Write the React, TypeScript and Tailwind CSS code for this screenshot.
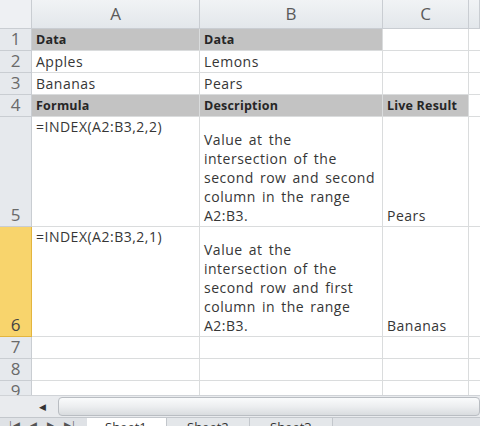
const font = "font-['Open_Sans','Liberation_Sans',sans-serif]";

type Cell = { lines?: string[]; bold?: boolean; fill?: boolean; valign?: "top" | "bottom" };

const rows: { label: string; h: string; selected?: boolean; cells: Cell[] }[] = [
  { label: "1", h: "h-[22px]", cells: [{ lines: ["Data"], bold: true, fill: true }, { lines: ["Data"], bold: true, fill: true }, {}] },
  { label: "2", h: "h-[22px]", cells: [{ lines: ["Apples"] }, { lines: ["Lemons"] }, {}] },
  { label: "3", h: "h-[22px]", cells: [{ lines: ["Bananas"] }, { lines: ["Pears"] }, {}] },
  {
    label: "4",
    h: "h-[22px]",
    cells: [
      { lines: ["Formula"], bold: true, fill: true },
      { lines: ["Description"], bold: true, fill: true },
      { lines: ["Live Result"], bold: true, fill: true },
    ],
  },
  {
    label: "5",
    h: "h-[110px]",
    cells: [
      { lines: ["=INDEX(A2:B3,2,2)"], valign: "top" },
      { lines: ["Value at the", "intersection of the", "second row and second", "column in the range", "A2:B3."] },
      { lines: ["Pears"] },
    ],
  },
  {
    label: "6",
    h: "h-[110px]",
    selected: true,
    cells: [
      { lines: ["=INDEX(A2:B3,2,1)"], valign: "top" },
      { lines: ["Value at the", "intersection of the", "second row and first", "column in the range", "A2:B3."] },
      { lines: ["Bananas"] },
    ],
  },
  { label: "7", h: "h-[22px]", cells: [{}, {}, {}] },
  { label: "8", h: "h-[22px]", cells: [{}, {}, {}] },
  { label: "9", h: "h-[22px]", cells: [{}, {}, {}] },
];

function DataCell({ cell }: { cell: Cell }) {
  return (
    <div
      className={`flex px-1 pb-[1px] border-r border-b border-[#dadcdd] overflow-hidden ${
        cell.valign === "top" ? "items-start" : "items-end"
      } ${cell.fill ? "bg-[#c3c3c3]" : "bg-white"}`}
    >
      <div
        className={`flex flex-col whitespace-nowrap ${
          cell.bold
            ? "text-[12.5px] font-bold tracking-[0.2px] text-[#262626] leading-[19px]"
            : "text-[14px] tracking-[0.5px] [word-spacing:2px] text-[#363636] leading-[19px]"
        }`}
      >
        {cell.lines?.map((l, i) => (
          <span key={i}>{l}</span>
        ))}
      </div>
    </div>
  );
}

export default function App() {
  return (
    <div className={`w-[480px] h-[426px] overflow-hidden bg-white flex flex-col ${font}`}>
      {/* Grid */}
      <div className="h-[395px] overflow-hidden shrink-0">
        <div className="grid grid-cols-[32px_168px_183px_86px_11px]">
          {/* Column headers */}
          <div className="h-[29px] bg-[#eef0f3] border-r border-b border-[#c9cdd2]" />
          {["A", "B", "C", ""].map((l, i) => (
            <div
              key={i}
              className="h-[29px] bg-gradient-to-b from-[#f1f3f5] to-[#e3e7eb] border-r border-b border-[#c9cdd2] flex items-center justify-center text-[17px] text-[#5a5a5a]"
            >
              {l}
            </div>
          ))}

          {rows.map((r) => (
            <div key={r.label} className="contents">
              <div
                className={`${r.h} flex items-end justify-center border-r border-b text-[17px] leading-[22px] ${
                  r.selected
                    ? "bg-[#f8d46c] border-[#e3b53e] text-[#444]"
                    : "bg-[#e6e9ed] border-[#c9cdd2] text-[#6a6a6a]"
                }`}
              >
                {r.label}
              </div>
              {r.cells.map((c, i) => (
                <DataCell key={i} cell={c} />
              ))}
              <div className="border-b border-[#dadcdd] bg-white" />
            </div>
          ))}
        </div>
      </div>

      {/* Horizontal scroll bar */}
      <div className="h-[22px] shrink-0 flex bg-[#e9ebee] border-t border-[#d0d3d7]">
        <div className="w-[58px] flex items-center justify-end pr-3 text-[9px] text-[#333]">◀</div>
        <div className="flex-1 my-[1px] rounded-sm border border-[#b9bdc2] bg-gradient-to-b from-[#fafbfc] via-[#eceef0] to-[#d9dcdf]" />
      </div>

      {/* Sheet tabs */}
      <div className="flex h-[22px] shrink-0 bg-[#dfe2e6] border-t border-[#c3c7cc] text-[13px] text-[#333]">
        <div className="w-[87px] flex items-start gap-[10px] pl-2 text-[9px] text-[#555]">
          <span>|◀</span>
          <span>◀</span>
          <span>▶</span>
          <span>▶|</span>
        </div>
        <div className="w-[80px] bg-white pl-[18px] border-r border-[#c3c7cc]">Sheet1</div>
        <div className="w-[83px] pl-[20px] border-r border-[#c3c7cc] bg-[#e4e7ea]">Sheet2</div>
        <div className="w-[83px] pl-[20px] border-r border-[#c3c7cc] bg-[#e4e7ea]">Sheet3</div>
      </div>
    </div>
  );
}
